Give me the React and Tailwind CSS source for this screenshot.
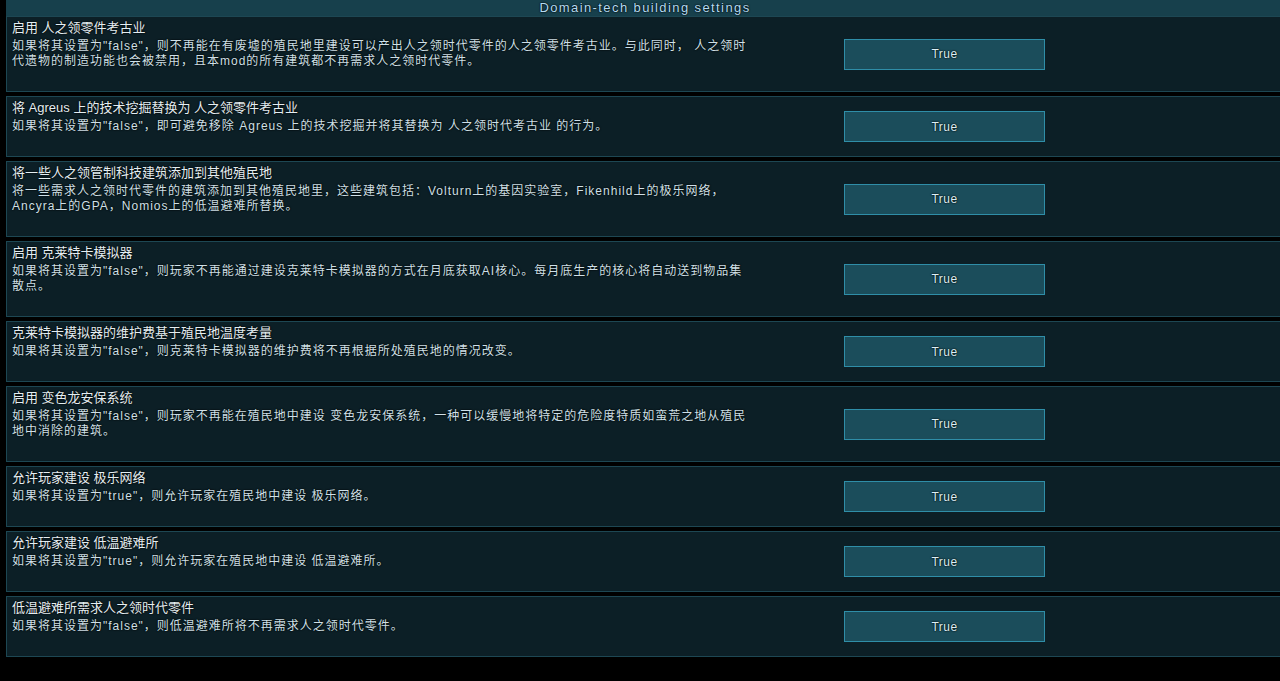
const settings = [
  {
    title: "启用 人之领零件考古业",
    lines: [
      "如果将其设置为\"false\"，则不再能在有废墟的殖民地里建设可以产出人之领时代零件的人之领零件考古业。与此同时， 人之领时",
      "代遗物的制造功能也会被禁用，且本mod的所有建筑都不再需求人之领时代零件。",
    ],
  },
  {
    title: "将 Agreus 上的技术挖掘替换为 人之领零件考古业",
    lines: ["如果将其设置为\"false\"，即可避免移除 Agreus 上的技术挖掘并将其替换为 人之领时代考古业 的行为。"],
  },
  {
    title: "将一些人之领管制科技建筑添加到其他殖民地",
    lines: [
      "将一些需求人之领时代零件的建筑添加到其他殖民地里，这些建筑包括：Volturn上的基因实验室，Fikenhild上的极乐网络，",
      "Ancyra上的GPA，Nomios上的低温避难所替换。",
    ],
  },
  {
    title: "启用 克莱特卡模拟器",
    lines: [
      "如果将其设置为\"false\"，则玩家不再能通过建设克莱特卡模拟器的方式在月底获取AI核心。每月底生产的核心将自动送到物品集",
      "散点。",
    ],
  },
  {
    title: "克莱特卡模拟器的维护费基于殖民地温度考量",
    lines: ["如果将其设置为\"false\"，则克莱特卡模拟器的维护费将不再根据所处殖民地的情况改变。"],
  },
  {
    title: "启用 变色龙安保系统",
    lines: [
      "如果将其设置为\"false\"，则玩家不再能在殖民地中建设 变色龙安保系统，一种可以缓慢地将特定的危险度特质如蛮荒之地从殖民",
      "地中消除的建筑。",
    ],
  },
  {
    title: "允许玩家建设 极乐网络",
    lines: ["如果将其设置为\"true\"，则允许玩家在殖民地中建设 极乐网络。"],
  },
  {
    title: "允许玩家建设 低温避难所",
    lines: ["如果将其设置为\"true\"，则允许玩家在殖民地中建设 低温避难所。"],
  },
  {
    title: "低温避难所需求人之领时代零件",
    lines: ["如果将其设置为\"false\"，则低温避难所将不再需求人之领时代零件。"],
  },
];

const font = "font-['Liberation_Sans','Noto_Sans_CJK_SC',sans-serif]";
const outline = "[text-shadow:0_0_2px_#000,0_0_1px_#000]";

function SettingRow({ item }) {
  return (
    <div className="flex items-center border border-[#1d4753] bg-[#0c1f26]">
      <div className={`w-[837px] pl-[5px] pt-[2px] pb-[22px] ${outline}`}>
        <div className="h-[18px] whitespace-nowrap text-[13px] leading-[18px] text-[#e4eef2]">
          {item.title}
        </div>
        <div className="mt-[2px]">
          {item.lines.map((l, i) => (
            <div
              key={i}
              className="h-[15px] whitespace-nowrap text-[12px] leading-[15px] tracking-[1px] text-[#cfe0e8]"
            >
              {l}
            </div>
          ))}
        </div>
      </div>
      <button
        className={`h-[31px] w-[201px] border border-[#2f8ea8] bg-[#1b4d5b] text-[12px] tracking-[0.5px] text-[#dcf0f7] ${outline}`}
      >
        True
      </button>
    </div>
  );
}

export default function App() {
  return (
    <div className={`h-[681px] w-full overflow-hidden bg-black pl-[6px] ${font}`}>
      <div className="w-[1278px]">
        {/* header */}
        <div className="flex h-4 items-center justify-center bg-[#17404c]">
          <span
            className={`text-[13px] leading-4 tracking-[1.4px] text-[#b4dcf2] ${outline}`}
          >
            Domain-tech building settings
          </span>
        </div>
        <div className="flex flex-col gap-1">
          {settings.map((s, i) => (
            <SettingRow key={i} item={s} />
          ))}
        </div>
      </div>
    </div>
  );
}
